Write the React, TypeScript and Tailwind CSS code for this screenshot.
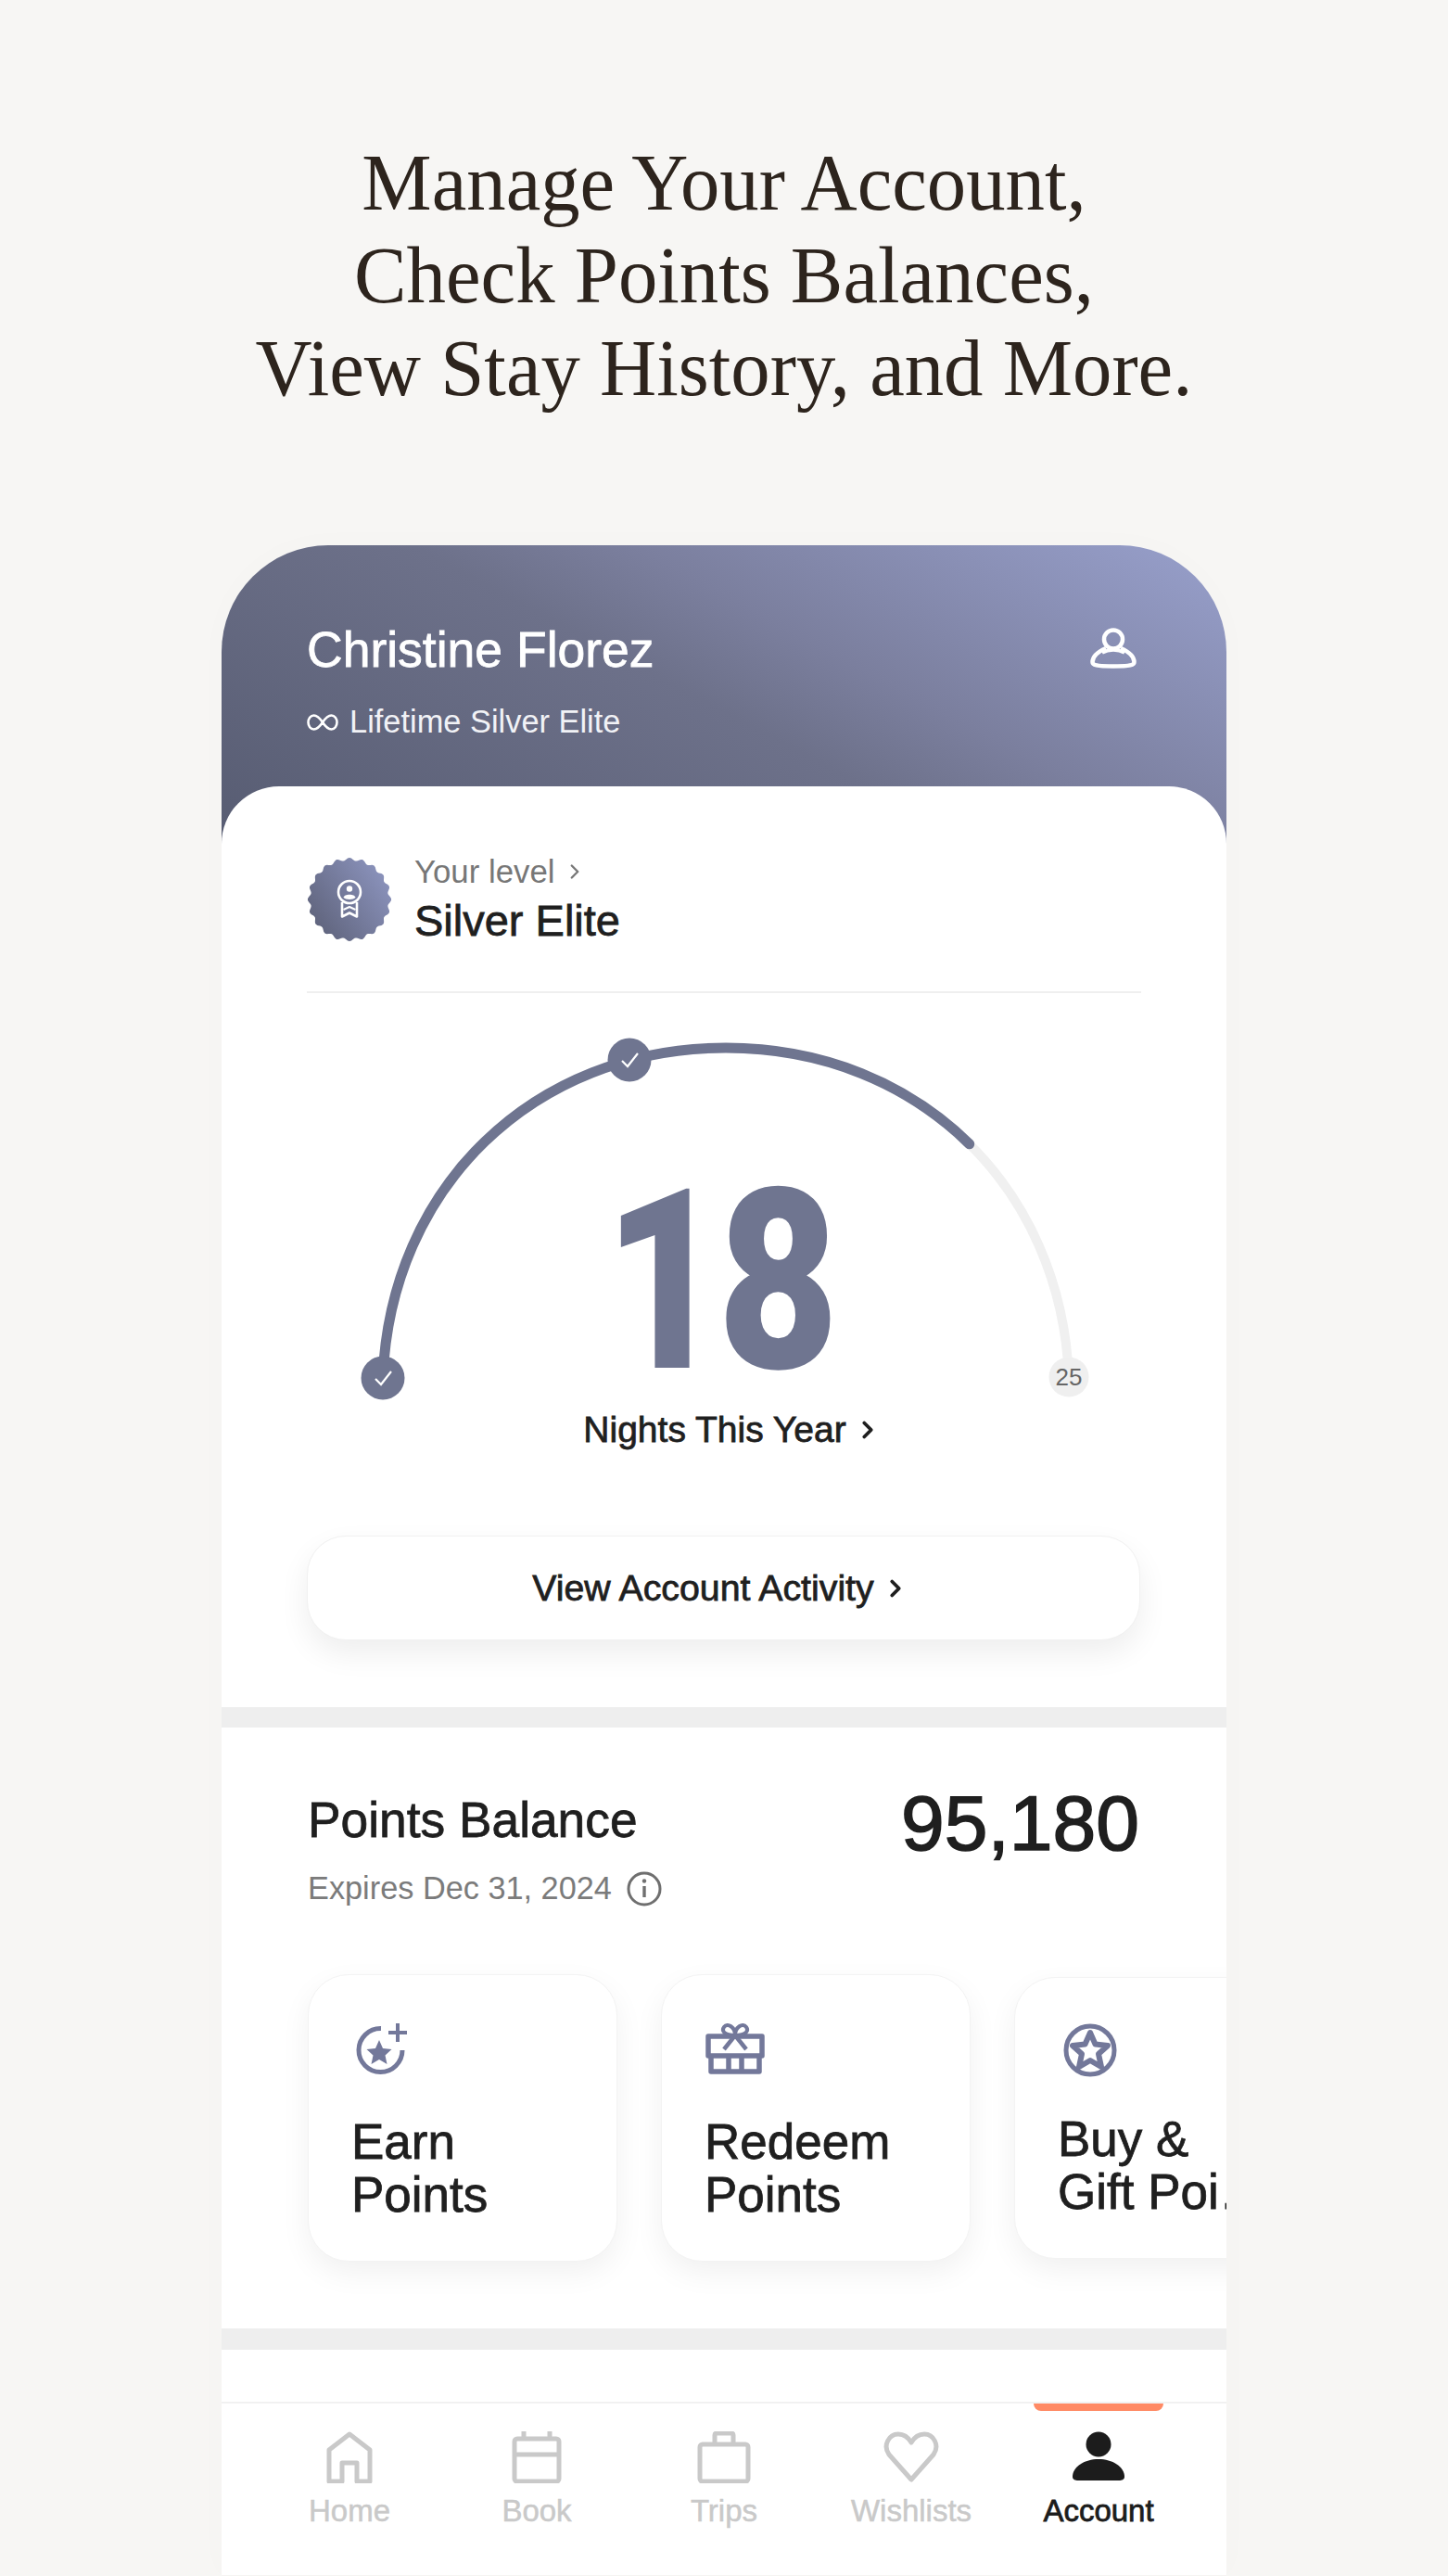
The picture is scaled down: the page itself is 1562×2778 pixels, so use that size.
import { ChevronRight } from "lucide-react";

const sansMedium = "[-webkit-text-stroke:0.8px_currentColor]";

const badgeOutline = Array.from({ length: 240 }, (_, i) => {
    const a = (i / 240) * Math.PI * 2;
    const r = 43.5 + 1.6 * Math.cos(a * 20);
    return `${i === 0 ? "M" : "L"}${(46 + r * Math.sin(a)).toFixed(2)} ${(46 - r * Math.cos(a)).toFixed(2)}`;
}).join(" ") + " Z";

const UserOutline = () => (
    <svg width="50" height="44" viewBox="0 0 50 44" fill="none" stroke="white" strokeWidth="4.5" className="mt-1.5 mr-[5px]">
        <circle cx="25" cy="12.5" r="10" />
        <path d="M17 22 C8 26 2.5 31 2.5 37 C2.5 40 6 41.5 25 41.5 C44 41.5 47.5 40 47.5 37 C47.5 31 42 26 33 22" strokeLinejoin="round" />
        <path d="M13 27 C20 23 30 23 37 27" strokeWidth="3.5" />
    </svg>
);

const LevelBadge = () => (
    <svg width="92" height="92" viewBox="0 0 92 92" className="shrink-0">
        <defs>
            <linearGradient id="badgeFill" x1="0" y1="0.9" x2="1" y2="0.2">
                <stop offset="0" stopColor="#5b5f76" />
                <stop offset="1" stopColor="#8d95bf" />
            </linearGradient>
        </defs>
        <path d={badgeOutline} fill="url(#badgeFill)" />
        <g fill="none" stroke="white" strokeWidth="2.6" strokeLinejoin="round">
            <circle cx="46" cy="38" r="12" />
            <path d="M38 49 V64.5 L46 60.5 L54 64.5 V49" />
            <path d="M39.5 57 L46 54 L52.5 57" strokeWidth="2" />
        </g>
        <circle cx="46" cy="34.5" r="3.2" fill="white" />
        <path d="M39.5 44 C40 39.5 52 39.5 52.5 44 C50 46.5 42 46.5 39.5 44 Z" fill="white" />
    </svg>
);

const arc = "M82 385 C90 180 244 29 452 29 C660 29 814 180 822 385";

const Gauge = () => (
    <div className="relative h-[416px] w-[900px]">
        <svg width="900" height="416" viewBox="0 0 900 416" fill="none" className="block">
            <path d={arc} stroke="#f0f0f0" strokeWidth="10" />
            <path d={arc} pathLength={100} strokeDasharray="75.4 100" stroke="#6f7590" strokeWidth="11" strokeLinecap="round" />
            <circle cx="82" cy="385" r="23.5" fill="#6f7590" />
            <path d="M74 386 L80 392 L91 378" stroke="white" strokeWidth="2.2" />
            <circle cx="348" cy="42" r="23.5" fill="#6f7590" />
            <path d="M340 43 L346 49 L357 35" stroke="white" strokeWidth="2.2" />
            <circle cx="822" cy="384" r="21.5" fill="#efefef" />
        </svg>
        <div className="absolute left-[800px] top-[362px] flex h-[44px] w-[44px] items-center justify-center text-[26px] text-[#666666]">25</div>
        <div className="absolute left-0 right-[14px] top-[181px] h-[200px] scale-x-[0.83] text-center font-['Roboto',sans-serif] text-[272px] leading-[200px] font-black tracking-[-10px] text-[#6f7590]">18</div>
    </div>
);

const ActionCard = ({ icon, lines, small }: { icon: React.ReactNode; lines: string[]; small?: boolean }) => (
    <div className={`w-[334px] shrink-0 rounded-[44px] border border-[#f3f3f3] bg-white pl-[46px] shadow-[0_12px_32px_rgba(0,0,0,0.06)] ${small ? "h-[304px] pt-[49px]" : "h-[310px] pt-[51px]"}`}>
        <div className="h-[58px]">{icon}</div>
        <div className={`whitespace-nowrap text-[53px] leading-[57px] text-[#1f1f1f] ${sansMedium} ${small ? "mt-[38px]" : "mt-[42px]"}`}>
            {lines.map((l) => (
                <div key={l}>{l}</div>
            ))}
        </div>
    </div>
);

const EarnIcon = () => (
    <svg width="62" height="58" viewBox="0 0 62 58" fill="none" stroke="#73789a" strokeWidth="5" className="ml-[1px]">
        <path d="M31 6.5 A23.5 23.5 0 1 0 54 30" strokeLinecap="butt" />
        <path d="M49 1 V21 M39 11 H59" strokeWidth="4" />
        <path d="M29 19 L33 28 L42.5 29 L35.5 35.5 L37.5 45 L29 40 L20.5 45 L22.5 35.5 L15.5 29 L25 28 Z" fill="#73789a" stroke="none" />
    </svg>
);

const GiftIcon = () => (
    <svg width="64" height="56" viewBox="0 0 64 56" fill="none" stroke="#73789a" strokeWidth="5.5" strokeLinejoin="round" className="ml-[1px]">
        <path d="M3 15 H61 V36 H3 Z" />
        <path d="M6 36 V53 H58 V36 M25 36 V53 M39 36 V53" />
        <path d="M32 14 C20 14 17 9 20 5 C24 0 32 5 32 14 C32 5 40 0 44 5 C47 9 44 14 32 14 Z" strokeWidth="4" />
        <path d="M32 14 L20 29 M32 14 L44 29" strokeWidth="4.5" />
    </svg>
);

const StarCircleIcon = () => (
    <svg width="58" height="58" viewBox="0 0 58 58" fill="none" stroke="#73789a" className="ml-[6px]">
        <circle cx="29" cy="29" r="26" strokeWidth="5" />
        <path d="M29 10 L34.5 22.5 L48 24 L38 33 L41 47 L29 40 L17 47 L20 33 L10 24 L23.5 22.5 Z" strokeWidth="6" strokeLinejoin="round" />
    </svg>
);

const navItems = [
    {
        label: "Home",
        icon: (
            <svg width="50" height="56" viewBox="0 0 50 56" fill="none" stroke="#c9c9c9" strokeWidth="5">
                <path d="M3 54 V20 L25 3 L47 20 V54 H33 V34 H17 V54 Z" strokeLinejoin="round" />
            </svg>
        ),
    },
    {
        label: "Book",
        icon: (
            <svg width="54" height="56" viewBox="0 0 54 56" fill="none" stroke="#c9c9c9" strokeWidth="5">
                <rect x="3" y="8" width="48" height="46" rx="3" />
                <path d="M3 25 H51" strokeWidth="5" />
                <path d="M13 0 V8 M41 0 V8" />
            </svg>
        ),
    },
    {
        label: "Trips",
        icon: (
            <svg width="58" height="56" viewBox="0 0 58 56" fill="none" stroke="#c9c9c9" strokeWidth="5">
                <rect x="3" y="14" width="52" height="40" rx="3" />
                <path d="M19 14 V4 C19 2.5 20 2 21.5 2 H36.5 C38 2 39 2.5 39 4 V14" />
            </svg>
        ),
    },
    {
        label: "Wishlists",
        icon: (
            <svg width="60" height="56" viewBox="0 0 60 56" fill="none" stroke="#c9c9c9" strokeWidth="5">
                <path d="M30 52 L6 25 C-1 15 6 3 16 3 C23 3 27 7 30 12 C33 7 37 3 44 3 C54 3 61 15 54 25 Z" strokeLinejoin="round" />
            </svg>
        ),
    },
    {
        label: "Account",
        active: true,
        icon: (
            <svg width="58" height="56" viewBox="0 0 58 56" fill="#1c1c1c">
                <ellipse cx="29" cy="14" rx="13.5" ry="13.5" />
                <path d="M1 49 C1 38 14 30 29 30 C44 30 57 38 57 49 C57 52 54 53 51 53 H7 C4 53 1 52 1 49 Z" />
            </svg>
        ),
    },
];

export default function App() {
    return (
        <div className="h-[2778px] overflow-hidden bg-[#f7f6f4] font-['Liberation_Sans',sans-serif]">
            <h1 className="scale-x-[0.974] pt-[147px] text-center font-['Liberation_Serif',serif] text-[87px] leading-[100px] text-[#2d241d]">
                Manage Your Account,
                <br />
                Check Points Balances,
                <br />
                View Stay History, and More.
            </h1>

            <div className="mx-auto mt-[141px] w-[1084px] overflow-hidden rounded-t-[115px] bg-white shadow-[0_0_40px_rgba(0,0,0,0.015)]">
                <div className="flex h-[322px] items-start justify-between bg-[linear-gradient(28deg,#575c72_0%,#6d718a_48%,#7b7f9e_62%,#98a0cc_100%)] px-[92px] pt-[83px]">
                    <div>
                        <div className={`text-[53.5px] leading-[60px] text-white ${sansMedium}`}>Christine Florez</div>
                        <div className="mt-[28px] flex h-[40px] items-center gap-3 text-[34.4px] text-[#f1f2f6]">
                            <svg width="34" height="18" viewBox="0 0 34 18" fill="none" stroke="white" strokeWidth="2.6">
                                <path d="M17 9 C13 3 10 1.5 7.5 1.5 C4 1.5 1.5 5 1.5 9 C1.5 13 4 16.5 7.5 16.5 C10 16.5 13 15 17 9 C21 3 24 1.5 26.5 1.5 C30 1.5 32.5 5 32.5 9 C32.5 13 30 16.5 26.5 16.5 C24 16.5 21 15 17 9 Z" />
                            </svg>
                            Lifetime Silver Elite
                        </div>
                    </div>
                    <UserOutline />
                </div>

                <section className="relative -mt-[62px] rounded-t-[62px] bg-white px-[92px] pt-[72px] pb-[72px]">
                    <div className="flex items-center gap-[24px]">
                        <LevelBadge />
                        <div>
                            <div className="flex h-[40px] items-center gap-2 text-[34.8px] text-[#777777]">
                                Your level
                                <ChevronRight size={26} strokeWidth={2.2} />
                            </div>
                            <div className={`mt-[7px] text-[47px] leading-[52px] text-[#1f1f1f] ${sansMedium}`}>Silver Elite</div>
                        </div>
                    </div>
                    <div className="mt-[50px] h-[2px] bg-[#efefef]" />
                    <div className="mt-[30px]">
                        <Gauge />
                    </div>
                    <div className={`flex h-[50px] items-center justify-center gap-2 pl-[18px] text-[39px] text-[#1f1f1f] ${sansMedium}`}>
                        Nights This Year
                        <ChevronRight size={30} strokeWidth={3} />
                    </div>
                    <button className={`mt-[89px] flex h-[113px] w-[899px] items-center justify-center gap-2 rounded-[42px] border border-[#f1f1f1] bg-white pr-[6px] text-[39.3px] text-[#1f1f1f] shadow-[0_14px_32px_rgba(0,0,0,0.07)] ${sansMedium}`}>
                        View Account Activity
                        <ChevronRight size={30} strokeWidth={3} />
                    </button>
                </section>

                <div className="h-[22px] bg-[#eeeeee]" />

                <section className="bg-white pt-[61px] pb-[72px] pl-[93px]">
                    <div className="flex items-start justify-between pr-[94px]">
                        <div className="mt-[7px]">
                            <div className={`text-[53.3px] leading-[64px] text-[#1f1f1f] ${sansMedium}`}>Points Balance</div>
                            <div className="mt-[20px] flex h-[44px] items-center gap-[16px] text-[34.3px] text-[#7b7b7b]">
                                Expires Dec 31, 2024
                                <svg width="38" height="38" viewBox="0 0 38 38" fill="none" stroke="#6f6f6f" strokeWidth="3">
                                    <circle cx="19" cy="19" r="17" />
                                    <path d="M19 16 V28" strokeWidth="3.4" />
                                    <circle cx="19" cy="10.5" r="2.2" fill="#6f6f6f" stroke="none" />
                                </svg>
                            </div>
                        </div>
                        <div className="text-[84px] leading-[84px] text-[#1f1f1f] [-webkit-text-stroke:1.6px_currentColor]">95,180</div>
                    </div>
                    <div className="mt-[70px] flex items-center gap-[47px]">
                        <ActionCard icon={<EarnIcon />} lines={["Earn", "Points"]} />
                        <ActionCard icon={<GiftIcon />} lines={["Redeem", "Points"]} />
                        <ActionCard icon={<StarCircleIcon />} lines={["Buy &", "Gift Poi…"]} small />
                    </div>
                </section>

                <div className="h-[23px] bg-[#eeeeee]" />
                <div className="h-[56px] bg-white" />

                <nav className="flex h-[187px] border-t-2 border-[#f1f1f1] bg-white px-[37px] pt-[30px]">
                    {navItems.map((item) => (
                        <div key={item.label} className="relative flex w-[202px] flex-col items-center">
                            {item.active && <div className="absolute -top-[30px] h-[8px] w-[140px] rounded-b-[8px] bg-[#ff8a65]" />}
                            <div className="flex h-[56px] items-center justify-center">{item.icon}</div>
                            <div className={`mt-[10px] text-[33px] leading-[40px] ${item.active ? `text-[#1c1c1c] ${sansMedium}` : "text-[#c9c9c9] [-webkit-text-stroke:0.5px_currentColor]"}`}>{item.label}</div>
                        </div>
                    ))}
                </nav>
            </div>
        </div>
    );
}
